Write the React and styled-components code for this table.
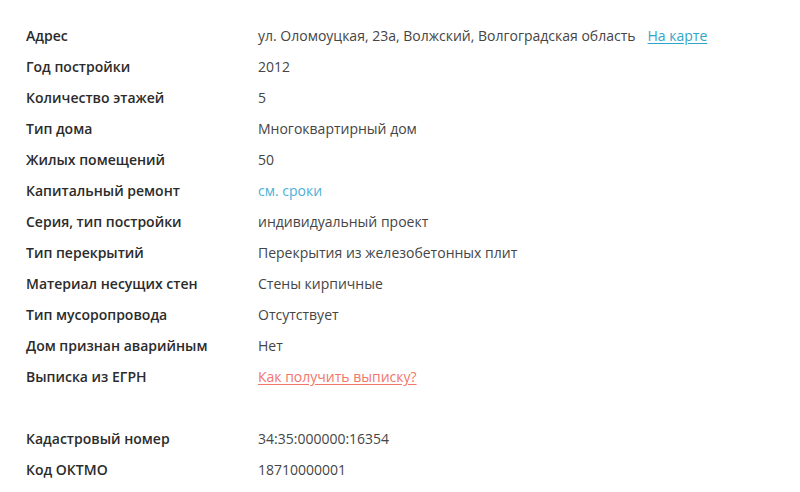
import React from "react";
import styled, { createGlobalStyle } from "styled-components";

const Global = createGlobalStyle`
  html, body { margin: 0; padding: 0; background: #fff; }
  body { font-family: "Open Sans", "Noto Sans", sans-serif; }
`;

const Wrap = styled.div`
  padding: 20px 26px 0 26px;
`;

const Table = styled.div`
  display: grid;
  grid-template-columns: 232px 1fr;
  grid-auto-rows: 31px;
  align-items: center;
  font-size: 14px;
`;

const Label = styled.div`
  font-weight: 600;
  color: #2b2b2b;
`;

const Value = styled.div`
  color: #454545;
  display: flex;
  align-items: center;
  gap: 12px;
`;

const Spacer = styled.div`
  grid-column: 1 / -1;
`;

const Link = styled.a`
  color: ${(p) => p.$color};
  text-decoration: ${(p) => (p.$underline ? "underline" : "none")};
  text-underline-offset: 2px;
  cursor: pointer;
`;

const rows = [
  ["Адрес", <>ул. Оломоуцкая, 23а, Волжский, Волгоградская область<Link $color="#2fa6c8" $underline>На карте</Link></>],
  ["Год постройки", "2012"],
  ["Количество этажей", "5"],
  ["Тип дома", "Многоквартирный дом"],
  ["Жилых помещений", "50"],
  ["Капитальный ремонт", <Link $color="#4cb0d6">см. сроки</Link>],
  ["Серия, тип постройки", "индивидуальный проект"],
  ["Тип перекрытий", "Перекрытия из железобетонных плит"],
  ["Материал несущих стен", "Стены кирпичные"],
  ["Тип мусоропровода", "Отсутствует"],
  ["Дом признан аварийным", "Нет"],
  ["Выписка из ЕГРН", <Link $color="#f2766a" $underline>Как получить выписку?</Link>],
  null,
  ["Кадастровый номер", "34:35:000000:16354"],
  ["Код ОКТМО", "18710000001"],
];

export default function App() {
  return (
    <>
      <Global />
      <Wrap>
        <Table>
          {rows.map((r, i) =>
            r === null ? (
              <Spacer key={i} />
            ) : (
              <React.Fragment key={i}>
                <Label>{r[0]}</Label>
                <Value>{r[1]}</Value>
              </React.Fragment>
            )
          )}
        </Table>
      </Wrap>
    </>
  );
}
